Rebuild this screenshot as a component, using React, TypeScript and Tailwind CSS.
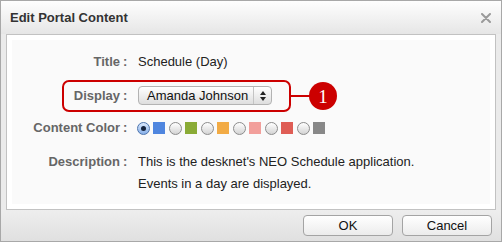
import React from "react";

type Swatch = {
  color: string;
  checked?: boolean;
};

const swatches: Swatch[] = [
  { color: "#4f86df", checked: true },
  { color: "#8aab36" },
  { color: "#f2ab45" },
  { color: "#f29f9b" },
  { color: "#df5d55" },
  { color: "#888888" },
];

const Radio = ({ checked }: { checked?: boolean }) => {
  if (checked) {
    return (
      <span className="flex h-[13px] w-[13px] items-center justify-center rounded-full border border-[#4d74ad] bg-gradient-to-b from-[#dbe9fc] to-[#86afe8]">
        <span className="h-[5px] w-[5px] rounded-full bg-[#15233d]" />
      </span>
    );
  }
  return (
    <span className="h-[13px] w-[13px] rounded-full border border-[#8c8c8c] bg-gradient-to-b from-[#ffffff] to-[#d4d4d4]" />
  );
};

const Label = ({ text }: { text: string }) => (
  <div className="flex shrink-0 items-center">
    <span className="w-[108px] text-right font-bold text-[#666]">{text}</span>
    <span className="ml-[3px] w-[4px] font-bold text-[#666]">:</span>
  </div>
);

export default function App() {
  return (
    <div className="flex h-[242px] w-[502px] flex-col border border-[#a8a8a8] bg-[#ebebeb] font-['Liberation_Sans',Arial,sans-serif] text-[13px] text-[#222]">
      {/* title bar */}
      <div className="flex h-[33px] shrink-0 items-center justify-between bg-gradient-to-b from-[#fefefe] to-[#e6e6e6] pl-[9px] pr-[10px]">
        <span className="text-[13px] font-bold text-[#333]">Edit Portal Content</span>
        <svg width="10" height="10" viewBox="0 0 10 10">
          <path d="M1 1 L9 9 M9 1 L1 9" stroke="#9a9a9a" strokeWidth="2" strokeLinecap="round" />
        </svg>
      </div>

      {/* content panel */}
      <div className="mx-[5px] h-[176px] shrink-0 border border-[#c2c2c2] bg-white p-[5px]">
        <div className="flex h-full flex-col bg-[#fafafa] pt-[12px]">
          <div className="flex h-[20px] items-center">
            <Label text="Title" />
            <span className="ml-[11px]">Schedule (Day)</span>
          </div>

          <div className="relative mt-[8px] flex h-[31px] items-center">
            <Label text="Display" />
            <div className="ml-[11px] flex h-[19px] shrink-0 items-center rounded-[4px] border border-[#b3b3b3] bg-gradient-to-b from-[#ffffff] to-[#dedede]">
              <span className="whitespace-nowrap pl-[8px] pr-[5px] leading-none text-[#111]">Amanda Johnson</span>
              <span className="flex h-full w-[18px] shrink-0 flex-col items-center justify-center gap-[2px] border-l border-[#c4c4c4]">
                <svg width="6" height="4" viewBox="0 0 6 4">
                  <path d="M3 0 L6 4 L0 4 Z" fill="#222" />
                </svg>
                <svg width="6" height="4" viewBox="0 0 6 4">
                  <path d="M0 0 L6 0 L3 4 Z" fill="#222" />
                </svg>
              </span>
            </div>

            {/* annotation */}
            <div className="absolute left-[50px] top-0 h-[32px] w-[229px] rounded-[7px] border-2 border-[#cc0000]" />
            <div className="absolute left-[279px] top-[15px] h-[2px] w-[19px] bg-[#cc0000]" />
            <div className="absolute left-[297px] top-[2px] flex h-[28px] w-[28px] items-center justify-center rounded-full bg-[#cc0000] font-['Liberation_Serif',serif] text-[19px] leading-none text-white">
              1
            </div>
          </div>

          <div className="mt-[7px] flex h-[20px] items-center">
            <Label text="Content Color" />
            <div className="ml-[10px] flex items-center">
              {swatches.map((s, i) => (
                <div key={i} className="mr-[4px] flex items-center">
                  <Radio checked={s.checked} />
                  <span className="ml-[3px] h-[12px] w-[12px]" style={{ backgroundColor: s.color }} />
                </div>
              ))}
            </div>
          </div>

          <div className="mt-[13px] flex items-start leading-[22px]">
            <Label text="Description" />
            <div className="ml-[11px]">
              <div>This is the desknet's NEO Schedule application.</div>
              <div>Events in a day are displayed.</div>
            </div>
          </div>
        </div>
      </div>

      {/* footer */}
      <div className="flex flex-1 items-start justify-end gap-[9px] bg-gradient-to-b from-[#eeeeee] to-[#e0e0e0] pr-[9px] pt-[5px]">
        <button className="h-[21px] w-[90px] rounded-[4px] border border-[#a4a4a4] bg-gradient-to-b from-[#ffffff] to-[#ececec] text-[13px] text-[#111]">
          OK
        </button>
        <button className="h-[21px] w-[90px] rounded-[4px] border border-[#a4a4a4] bg-gradient-to-b from-[#ffffff] to-[#ececec] text-[13px] text-[#111]">
          Cancel
        </button>
      </div>
    </div>
  );
}
